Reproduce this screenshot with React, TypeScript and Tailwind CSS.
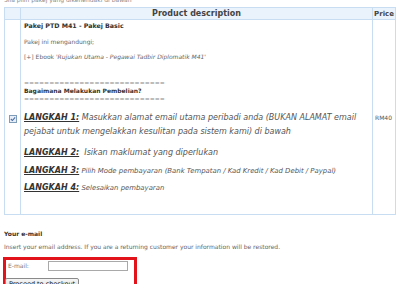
import React from "react"

const steps = [
    { label: "LANGKAH 1:", text: " Masukkan alamat email utama peribadi anda (BUKAN ALAMAT email pejabat untuk mengelakkan kesulitan pada sistem kami) di bawah", big: true, gap: "" },
    { label: "LANGKAH 2:", text: "\u00a0 Isikan maklumat yang diperlukan", big: true, gap: "mt-[7px]" },
    { label: "LANGKAH 3:", text: " Pilih Mode pembayaran (Bank Tempatan / Kad Kredit / Kad Debit / Paypal)", big: false, gap: "mt-[4px]" },
    { label: "LANGKAH 4:", text: " Selesaikan pembayaran", big: false, gap: "mt-[3px]" },
]

function Checkbox() {
    return (
        <span className="inline-flex items-center justify-center w-[8px] h-[8px] border border-[#7f9db9] bg-[#e8eef7]">
            <svg viewBox="0 0 7 7" className="w-[6px] h-[6px]">
                <path d="M1 3.5 L2.8 5.3 L6 1.5" fill="none" stroke="#4a6fa5" strokeWidth="1.3" />
            </svg>
        </span>
    )
}

export default function App() {
    return (
        <div className="w-[400px] h-[284px] overflow-hidden bg-white text-[#666] font-['DejaVu_Sans',Verdana,sans-serif]">
            {/* cut off line at the very top */}
            <div className="-mt-[4px] h-[11px] pl-[4px] text-[6px] leading-[8px] text-[#888]">Sila pilih pakej yang dikehendaki di bawah</div>

            <table className="ml-[4px] w-[391px] border-collapse table-fixed">
                <colgroup>
                    <col className="w-[16px]" />
                    <col className="w-[352px]" />
                    <col className="w-[23px]" />
                </colgroup>
                <thead>
                    <tr className="h-[12px] bg-[#eaf3fc]">
                        <th className="border border-[#c8dcf2]"></th>
                        <th className="border border-[#c8dcf2] text-center text-[8px] leading-[10px] font-bold text-[#444]">Product description</th>
                        <th className="border border-[#c8dcf2] text-center text-[7px] leading-[10px] font-bold text-[#444]">Price</th>
                    </tr>
                </thead>
                <tbody>
                    <tr className="h-[195px]">
                        <td className="border border-[#c8dcf2] align-middle text-center">
                            <Checkbox />
                        </td>
                        <td className="border border-[#c8dcf2] align-top pl-[3px] pt-[2px]">
                            <div className="text-[6.3px] leading-[8px] font-bold text-[#333]">Pakej PTD M41 - Pakej Basic</div>
                            <div className="mt-[8px] text-[6px] leading-[8px]">Pakej ini mengandungi;</div>
                            <div className="mt-[7px] text-[6px] leading-[8px]">
                                [+] Ebook <i>'Rujukan Utama - Pegawai Tadbir Diplomatik M41'</i>
                            </div>
                            <div className="mt-[18px] text-[6px] leading-[8px] text-[#888]">============================</div>
                            <div className="text-[6px] leading-[8px] font-bold text-[#333]">Bagaimana Melakukan Pembelian?</div>
                            <div className="text-[6px] leading-[7px] text-[#888]">============================</div>
                            <div className="mt-[9px]">
                                {steps.map((s) => (
                                    <p key={s.label} className={`${s.gap} text-[8px] leading-[14px] italic text-[#555]`}>
                                        <span className="font-bold underline text-[#333]">{s.label}</span>
                                        <span className={s.big ? "text-[8px]" : "text-[6.9px]"}>{s.text}</span>
                                    </p>
                                ))}
                            </div>
                        </td>
                        <td className="border border-[#c8dcf2] align-middle pl-[2px] text-[6px] text-[#555]">RM40</td>
                    </tr>
                </tbody>
            </table>

            <div className="mt-[15px] pl-[4px] text-[6px] leading-[8px] font-bold text-[#333]">Your e-mail</div>
            <div className="mt-[5px] pl-[4px] text-[6px] leading-[8px] text-[#666]">
                Insert your email address. If you are a returning customer your information will be restored.
            </div>

            <div className="mt-[6px] ml-[3px] w-[134px] h-[40px] border-[3px] border-[#e3131b] px-[2px] pt-[1px]">
                <div className="flex items-center h-[10px]">
                    <span className="w-[40px] text-[6px] leading-[8px] text-[#777]">E-mail:</span>
                    <input type="text" className="w-[80px] h-[10px] border border-[#a9a9a9] bg-white outline-none" />
                </div>
                <button className="block mt-[7px] -ml-[3px] px-[3px] py-[1px] border border-[#8a8a8a] rounded-[2px] bg-gradient-to-b from-[#f6f6f6] to-[#dcdcdc] text-[6.5px] leading-[8px] text-[#111] font-['DejaVu_Sans',sans-serif]">
                    Proceed to checkout
                </button>
            </div>
        </div>
    )
}
